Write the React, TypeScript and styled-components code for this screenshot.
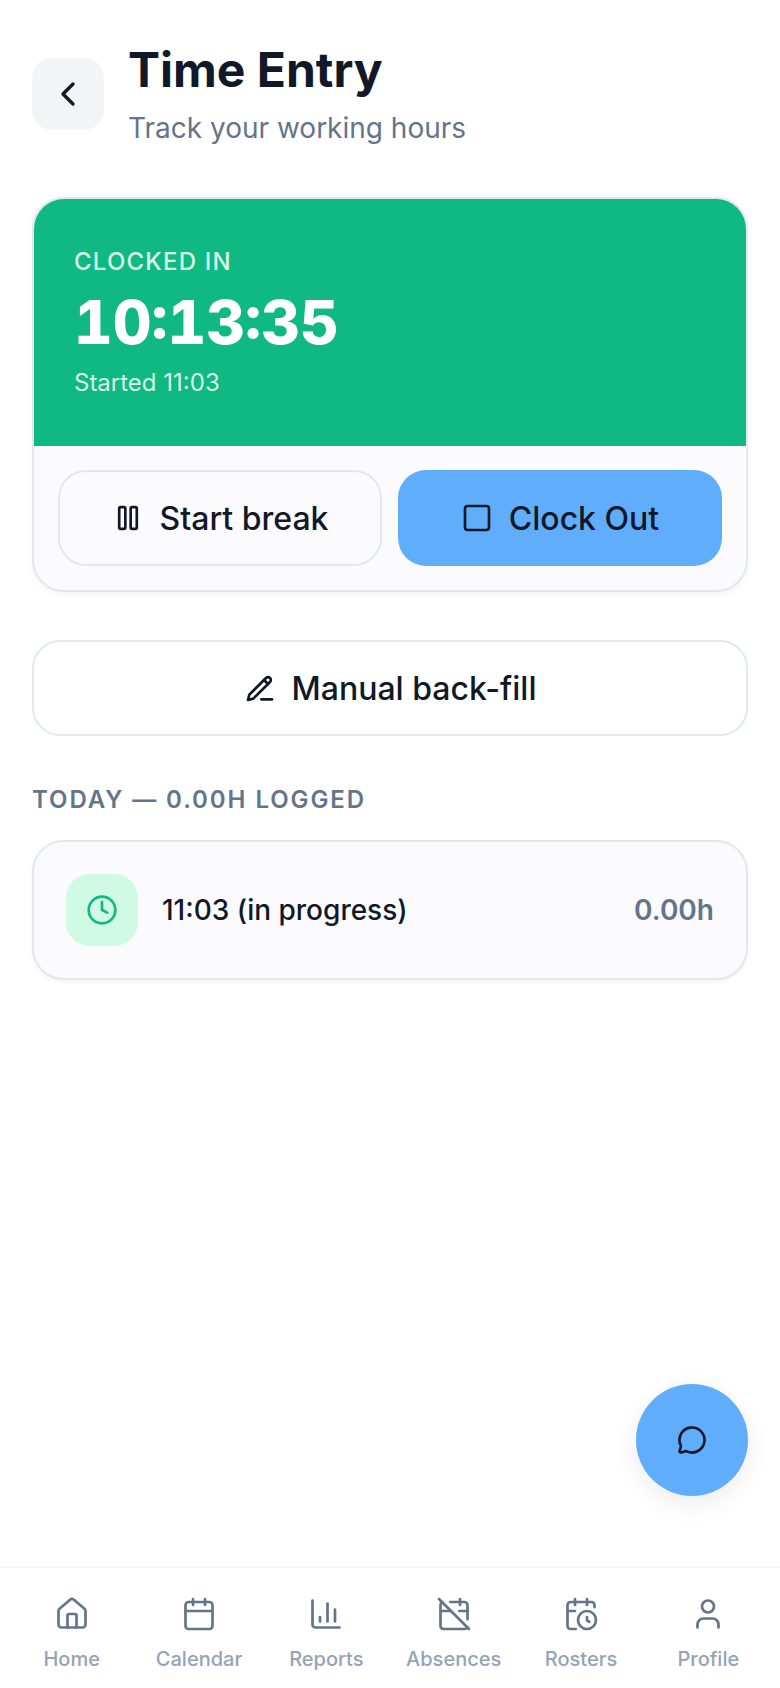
import React from "react";
import styled, { createGlobalStyle } from "styled-components";
import {
  ChevronLeft, Square, Clock, House, Calendar, ChartColumn,
  CalendarOff, CalendarClock, User, MessageCircle,
} from "lucide-react";

const Global = createGlobalStyle`
  html, body { margin: 0; padding: 0; background: #fff; }
  body { font-family: Inter, "Noto Sans", sans-serif; color: #111827; }
  * { box-sizing: border-box; }
`;

const Page = styled.div`
  position: relative;
  width: 780px;
  height: 1688px;
  display: flex;
  flex-direction: column;
  background: #fff;
  overflow: hidden;
`;

const Main = styled.main`
  flex: 1;
  padding: 40px 32px 0;
  display: flex;
  flex-direction: column;
`;

const Header = styled.header`
  display: flex;
  align-items: center;
  gap: 24px;
  margin-bottom: 49px;
`;

const BackButton = styled.button`
  width: 72px;
  height: 72px;
  border: 0;
  border-radius: 20px;
  background: #f3f4f6;
  color: #111827;
  display: flex;
  align-items: center;
  justify-content: center;
  padding: 0;
`;

const Title = styled.h1`
  margin: 0;
  font-size: 48px;
  line-height: 60px;
  font-weight: 700;
  color: #111827;
`;

const Subtitle = styled.p`
  margin: 8px 0 0;
  font-size: 28px;
  line-height: 40px;
  color: #64748b;
`;

const ClockCard = styled.section`
  border: 2px solid #e2e8f0;
  border-radius: 32px;
  background: #fbfbfd;
  overflow: hidden;
  box-shadow: 0 2px 6px rgba(15, 23, 42, 0.06);
  margin-bottom: 48px;
`;

const ClockHero = styled.div`
  height: 247px;
  background: #10b981;
  color: #fff;
  padding: 47px 40px 0;
`;

const ClockLabel = styled.div`
  font-size: 24px;
  line-height: 32px;
  font-weight: 500;
  letter-spacing: 1.2px;
  color: rgba(255, 255, 255, 0.85);
`;

const ClockTime = styled.div`
  font-size: 60px;
  line-height: 80px;
  font-weight: 800;
  font-variant-numeric: tabular-nums;
  margin-top: 4px;
`;

const ClockStart = styled.div`
  font-size: 24px;
  line-height: 32px;
  margin-top: 5px;
  color: rgba(255, 255, 255, 0.85);
`;

const Actions = styled.div`
  display: grid;
  grid-template-columns: 1fr 1fr;
  gap: 16px;
  padding: 24px;
`;

const ActionButton = styled.button<{ $primary?: boolean; $surface?: string }>`
  height: 96px;
  border-radius: 28px;
  border: ${(p) => (p.$primary ? "0" : "2px solid #e2e8f0")};
  background: ${(p) => (p.$primary ? "#60aefb" : p.$surface ?? "#fbfbfd")};
  color: #111827;
  font-family: inherit;
  font-size: 32px;
  font-weight: 500;
  display: flex;
  align-items: center;
  justify-content: center;
  gap: 16px;
  padding: 0;
`;

const SectionLabel = styled.h2`
  margin: 48px 0 24px;
  font-size: 24px;
  line-height: 32px;
  font-weight: 600;
  letter-spacing: 1.92px;
  color: #64748b;
`;

const EntryCard = styled.div`
  height: 140px;
  border: 2px solid #e2e8f0;
  border-radius: 32px;
  background: #fbfbfd;
  box-shadow: 0 2px 4px rgba(15, 23, 42, 0.05);
  padding: 0 32px;
  display: flex;
  align-items: center;
  gap: 24px;
`;

const EntryIcon = styled.div`
  width: 72px;
  height: 72px;
  border-radius: 24px;
  background: #d1fae5;
  color: #10b981;
  display: flex;
  align-items: center;
  justify-content: center;
`;

const EntryText = styled.div`
  flex: 1;
  font-size: 28px;
  font-weight: 500;
`;

const EntryHours = styled.div`
  font-size: 28px;
  font-weight: 600;
  color: #64748b;
`;

const Fab = styled.button`
  position: absolute;
  right: 32px;
  bottom: 192px;
  width: 112px;
  height: 112px;
  border: 0;
  border-radius: 50%;
  background: #60aefb;
  color: #111827;
  display: flex;
  align-items: center;
  justify-content: center;
  box-shadow: 0 8px 24px rgba(15, 23, 42, 0.08);
`;

const BottomNav = styled.nav`
  height: 122px;
  border-top: 2px solid #f1f5f9;
  background: #fff;
  display: grid;
  grid-template-columns: repeat(6, 1fr);
  padding: 0 8px;
`;

const NavItem = styled.a`
  display: flex;
  flex-direction: column;
  align-items: center;
  padding-top: 28px;
  gap: 13px;
  color: #64748b;
`;

const NavLabel = styled.span`
  font-size: 20px;
  line-height: 28px;
  font-weight: 500;
  color: #94a3b8;
`;

const ButtonIcon = styled.svg`
  width: 32px;
  height: 32px;
  fill: none;
  stroke: currentColor;
  stroke-width: 2;
  stroke-linecap: round;
  stroke-linejoin: round;
  flex: none;
`;

const PauseGlyph = () => (
  <ButtonIcon viewBox="0 0 24 24" aria-hidden="true">
    <rect x="5.4" y="3.9" width="4.6" height="16.2" rx="1" />
    <rect x="14" y="3.9" width="4.6" height="16.2" rx="1" />
  </ButtonIcon>
);

const PencilGlyph = () => (
  <ButtonIcon viewBox="0 0 24 24" aria-hidden="true">
    <path d="M3 21l1-4L16.5 4.5a2.12 2.12 0 0 1 3 3L7 20z" />
    <path d="M15 6l3 3" />
    <path d="M13 20.5h8" />
  </ButtonIcon>
);

const navItems = [
  { label: "Home", Icon: House },
  { label: "Calendar", Icon: Calendar },
  { label: "Reports", Icon: ChartColumn },
  { label: "Absences", Icon: CalendarOff },
  { label: "Rosters", Icon: CalendarClock },
  { label: "Profile", Icon: User },
];

export default function App() {
  return (
    <Page>
      <Global />
      <Main>
        <Header>
          <BackButton aria-label="Back"><ChevronLeft size={40} strokeWidth={2} /></BackButton>
          <div>
            <Title>Time Entry</Title>
            <Subtitle>Track your working hours</Subtitle>
          </div>
        </Header>
        <ClockCard>
          <ClockHero>
            <ClockLabel>CLOCKED IN</ClockLabel>
            <ClockTime>10:13:35</ClockTime>
            <ClockStart>Started 11:03</ClockStart>
          </ClockHero>
          <Actions>
            <ActionButton><PauseGlyph />Start break</ActionButton>
            <ActionButton $primary><Square size={32} />Clock Out</ActionButton>
          </Actions>
        </ClockCard>
        <ActionButton $surface="#fff"><PencilGlyph />Manual back-fill</ActionButton>
        <SectionLabel>TODAY — 0.00H LOGGED</SectionLabel>
        <EntryCard>
          <EntryIcon><Clock size={32} /></EntryIcon>
          <EntryText>11:03 (in progress)</EntryText>
          <EntryHours>0.00h</EntryHours>
        </EntryCard>
      </Main>
      <Fab aria-label="Chat"><MessageCircle size={30} strokeWidth={2.1} /></Fab>
      <BottomNav>
        {navItems.map(({ label, Icon }) => (
          <NavItem key={label}>
            <Icon size={36} strokeWidth={1.8} />
            <NavLabel>{label}</NavLabel>
          </NavItem>
        ))}
      </BottomNav>
    </Page>
  );
}
